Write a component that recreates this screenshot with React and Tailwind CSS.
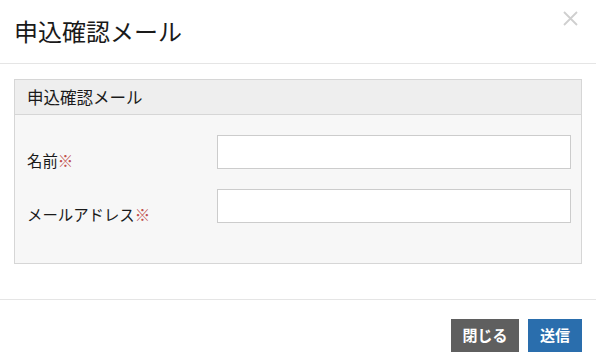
export default function App() {
  const font = { fontFamily: '"Noto Sans CJK JP", "Noto Sans", sans-serif' };
  return (
    <div className="w-[596px] h-[362px] bg-white text-[#222]" style={font}>
      <div className="h-[64px] border-b border-[#e5e5e5] flex items-center justify-between pl-[14px] pr-[18px]">
        <div className="text-[24px] leading-none pb-[1px] text-[#1a1a1a]">申込確認メール</div>
        <svg width="15" height="15" viewBox="0 0 15 15" className="mb-[26px]">
          <path d="M1 1L14 14M14 1L1 14" stroke="#cfcfcf" strokeWidth="1.8" />
        </svg>
      </div>
      <div className="px-[14px] pt-[15px] pb-[35px] border-b border-[#e5e5e5]">
        <div className="border border-[#d6d6d6] bg-[#f7f7f7]">
          <div className="h-[35px] bg-[#eeeeee] border-b border-[#d6d6d6] flex items-center pl-[12px] text-[16.5px] text-[#1a1a1a]">
            申込確認メール
          </div>
          <div className="pt-[20px] pb-[40px] pl-[12px] pr-[10px] flex flex-col gap-[20px]">
            <div className="flex items-start h-[34px]">
              <div className="w-[190px] text-[15.4px] leading-[20px] pt-[15px] text-[#1a1a1a]">名前<span className="text-[#c0504d]">※</span></div>
              <div className="flex-1 h-[34px] bg-white border border-[#cccccc]"></div>
            </div>
            <div className="flex items-start h-[34px]">
              <div className="w-[190px] text-[15.4px] leading-[20px] pt-[15px] text-[#1a1a1a]">メールアドレス<span className="text-[#c0504d]">※</span></div>
              <div className="flex-1 h-[34px] bg-white border border-[#cccccc]"></div>
            </div>
          </div>
        </div>
      </div>
      <div className="flex justify-end gap-[9px] pr-[14px] pt-[19px]">
        <button className="w-[68px] h-[33px] bg-[#5f5f5f] text-white text-[15px] font-bold flex items-center justify-center">閉じる</button>
        <button className="w-[54px] h-[33px] bg-[#2a6ead] text-white text-[15px] font-bold flex items-center justify-center">送信</button>
      </div>
    </div>
  );
}
